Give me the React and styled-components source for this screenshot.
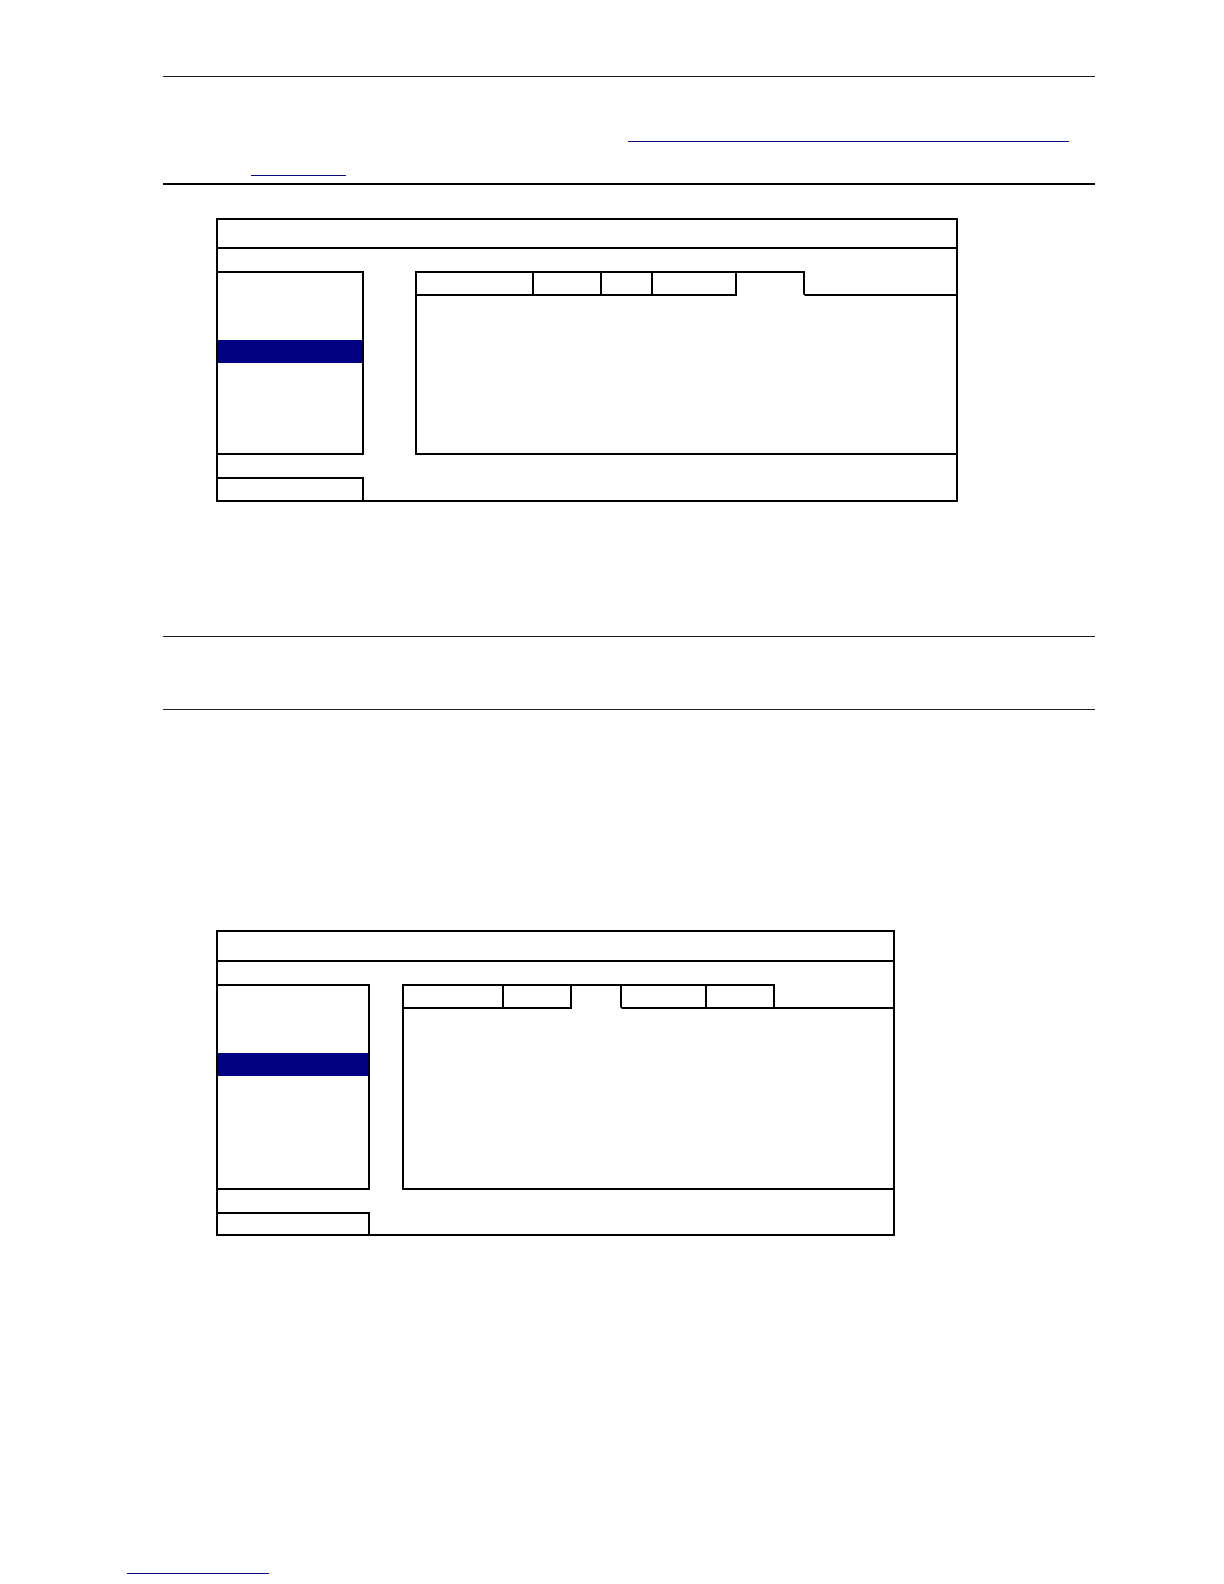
import React from "react";
import styled, { createGlobalStyle } from "styled-components";

const GlobalStyle = createGlobalStyle`
    html, body {
        margin: 0;
        padding: 0;
        background: #ffffff;
        font-family: "Liberation Sans", Arial, sans-serif;
    }
    * {
        box-sizing: border-box;
    }
`;

const windows = [
    {
        width: 742,
        titleHeight: 27,
        menuWidth: 146,
        gap: 51,
        bodyHeight: 157,
        exitHeight: 23,
        tabs: [119, 68, 51, 84, 68],
        active: 4,
    },
    {
        width: 679,
        titleHeight: 28,
        menuWidth: 152,
        gap: 32,
        bodyHeight: 179,
        exitHeight: 22,
        tabs: [102, 68, 50, 85, 68],
        active: 2,
    },
];

const MENU_ROWS = 8;
const SELECTED_ROW = 3;

const OsdWindow = ({ config }) => {
    const { width, titleHeight, menuWidth, gap, bodyHeight, exitHeight, tabs, active } = config;

    return (
        <Window $width={width}>
            <TitleBar $height={titleHeight} />
            <Body $menu={menuWidth} $gap={gap}>
                <Menu>
                    {Array.from({ length: MENU_ROWS }).map((_, i) => (
                        <MenuItem key={i} $selected={i === SELECTED_ROW} />
                    ))}
                </Menu>
                <Panel>
                    <TabStrip>
                        {tabs.map((w, i) => (
                            <Tab key={i} $width={w} $first={i === 0} $active={i === active} />
                        ))}
                        <TabFiller />
                    </TabStrip>
                    <PanelBody $height={bodyHeight} />
                </Panel>
            </Body>
            <Footer>
                <ExitBox $width={menuWidth} $height={exitHeight} />
            </Footer>
        </Window>
    );
};

const App = () => {
    return (
        <>
            <GlobalStyle />
            <Page>
                <Content>
                    <Rule />
                    <Note>
                        <NoteLine $height={65}>
                            <Link $offset={465} $width={441} />
                        </NoteLine>
                        <NoteLine $height={34}>
                            <Link $offset={88} $width={95} />
                        </NoteLine>
                    </Note>
                    <Rule $thick />

                    <Figure $top={33}>
                        <OsdWindow config={windows[0]} />
                    </Figure>

                    <Rule $top={134} />
                    <Rule $top={72} />

                    <Figure $top={220}>
                        <OsdWindow config={windows[1]} />
                    </Figure>
                </Content>
                <PageFooter>
                    <Link $offset={0} $width={142} />
                </PageFooter>
            </Page>
        </>
    );
};

export default App;

const Page = styled.div`
    width: 1224px;
    min-height: 1584px;
    padding-top: 76px;
    background: #ffffff;
`;

const Content = styled.div`
    margin-left: 163px;
    width: 932px;
`;

const Rule = styled.div`
    margin-top: ${(p) => p.$top || 0}px;
    height: ${(p) => (p.$thick ? 2 : 1)}px;
    background: ${(p) => (p.$thick ? "#000000" : "#1e1e1e")};
`;

const Note = styled.div`
    display: flex;
    flex-direction: column;
    padding-bottom: 7px;
`;

const NoteLine = styled.div`
    display: flex;
    align-items: flex-end;
    height: ${(p) => p.$height}px;
`;

const Link = styled.span`
    display: block;
    margin-left: ${(p) => p.$offset}px;
    width: ${(p) => p.$width}px;
    height: 1px;
    background: #0a0a80;
`;

const Figure = styled.div`
    margin-top: ${(p) => p.$top}px;
    margin-left: 53px;
`;

const Window = styled.div`
    width: ${(p) => p.$width}px;
    border: 2px solid #000000;
    background: #ffffff;
`;

const TitleBar = styled.div`
    height: ${(p) => p.$height + 2}px;
    border-bottom: 2px solid #000000;
`;

const Body = styled.div`
    display: grid;
    grid-template-columns: ${(p) => p.$menu}px 1fr;
    column-gap: ${(p) => p.$gap}px;
    padding-top: 22px;
`;

const Menu = styled.div`
    display: flex;
    flex-direction: column;
    padding-top: 1px;
    border-top: 2px solid #000000;
    border-right: 2px solid #000000;
    border-bottom: 2px solid #000000;
    overflow: hidden;
`;

const MenuItem = styled.div`
    flex: 0 0 ${(p) => (p.$selected ? 23 : 22)}px;
    background: ${(p) => (p.$selected ? "#000080" : "transparent")};
`;

const Panel = styled.div`
    display: flex;
    flex-direction: column;
    border-left: 2px solid #000000;
    border-bottom: 2px solid #000000;
`;

const TabStrip = styled.div`
    display: flex;
    height: 25px;
    margin-left: -2px;
`;

const Tab = styled.div`
    flex: 0 0 ${(p) => p.$width}px;
    border-top: 2px solid #000000;
    border-right: 2px solid #000000;
    border-left: ${(p) => (p.$first ? "2px solid #000000" : "none")};
    border-bottom: 2px solid ${(p) => (p.$active ? "transparent" : "#000000")};
`;

const TabFiller = styled.div`
    flex: 1;
    border-bottom: 2px solid #000000;
`;

const PanelBody = styled.div`
    height: ${(p) => p.$height}px;
`;

const Footer = styled.div`
    padding-top: 22px;
`;

const ExitBox = styled.div`
    width: ${(p) => p.$width}px;
    height: ${(p) => p.$height}px;
    border-top: 2px solid #000000;
    border-right: 2px solid #000000;
`;

const PageFooter = styled.div`
    margin-top: 337px;
    margin-left: 127px;
`;
